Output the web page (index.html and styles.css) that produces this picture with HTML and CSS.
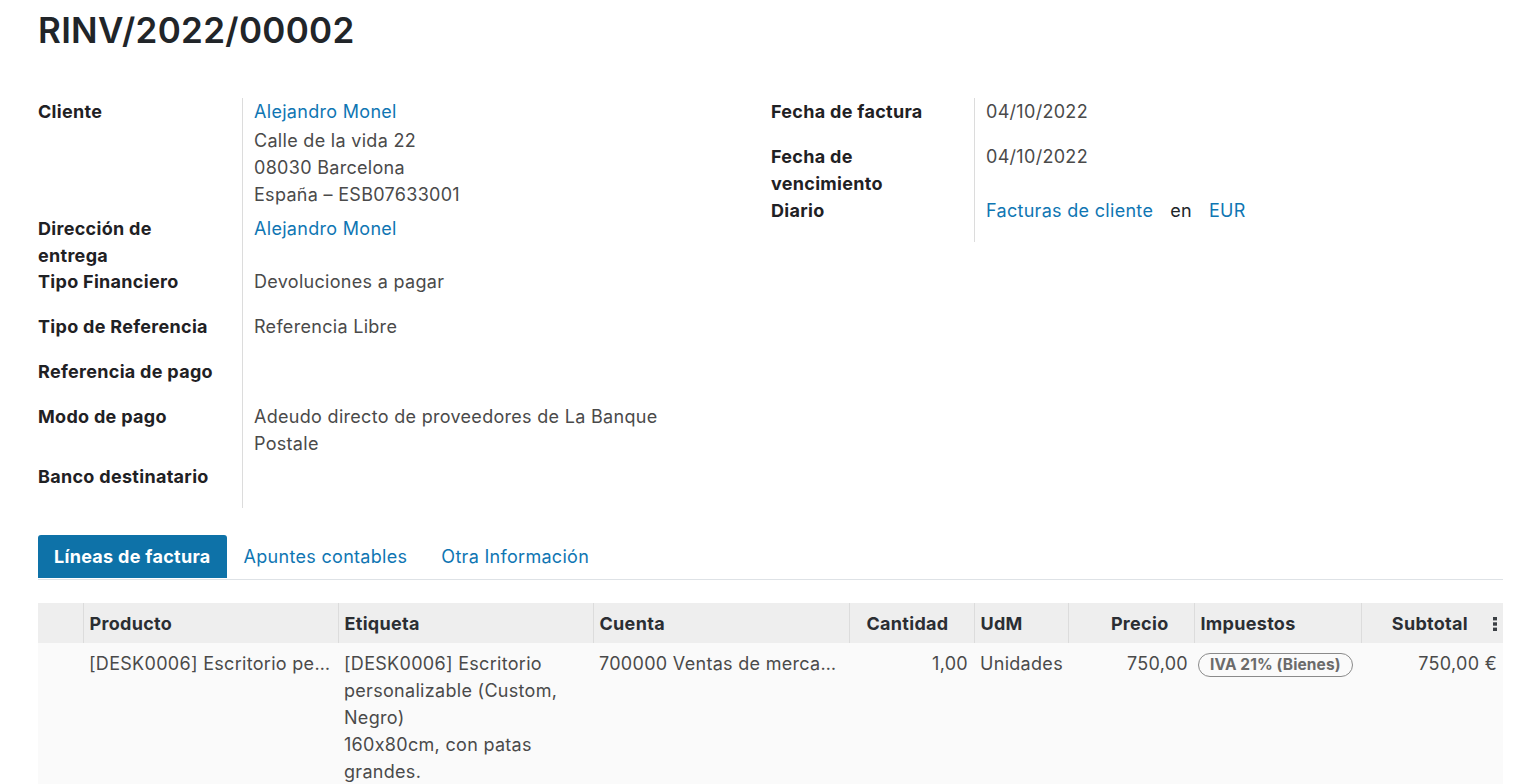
FILE: index.html
```html
<!DOCTYPE html>
<html lang="es">
<head>
<meta charset="utf-8">
<title>RINV/2022/00002</title>
<link rel="stylesheet" href="styles.css">
</head>
<body>
<div class="sheet">
  <h1 class="title">RINV/2022/00002</h1>

  <div class="groups">
    <div class="group group-left">
      <div class="row">
        <div class="label">Cliente</div>
        <div class="value multi">
          <a class="link first">Alejandro Monel</a>
          <div>Calle de la vida 22</div>
          <div>08030 Barcelona</div>
          <div>España – ESB07633001</div>
        </div>
      </div>
      <div class="row tight">
        <div class="label">Dirección de entrega</div>
        <div class="value"><a class="link">Alejandro Monel</a></div>
      </div>
      <div class="row">
        <div class="label">Tipo Financiero</div>
        <div class="value">Devoluciones a pagar</div>
      </div>
      <div class="row">
        <div class="label">Tipo de Referencia</div>
        <div class="value">Referencia Libre</div>
      </div>
      <div class="row">
        <div class="label">Referencia de pago</div>
        <div class="value"></div>
      </div>
      <div class="row">
        <div class="label">Modo de pago</div>
        <div class="value multi wrap">Adeudo directo de proveedores de La Banque Postale</div>
      </div>
      <div class="row">
        <div class="label">Banco destinatario</div>
        <div class="value"></div>
      </div>
    </div>

    <div class="group group-right">
      <div class="row">
        <div class="label">Fecha de factura</div>
        <div class="value">04/10/2022</div>
      </div>
      <div class="row">
        <div class="label">Fecha de vencimiento</div>
        <div class="value">04/10/2022</div>
      </div>
      <div class="row">
        <div class="label">Diario</div>
        <div class="value journal"><a class="link">Facturas de cliente</a><span class="en">en</span><a class="link">EUR</a></div>
      </div>
    </div>
  </div>

  <ul class="tabs">
    <li class="tab active">Líneas de factura</li>
    <li class="tab">Apuntes contables</li>
    <li class="tab">Otra Información</li>
  </ul>

  <table class="lines">
    <colgroup>
      <col class="c-handle">
      <col class="c-product">
      <col class="c-label">
      <col class="c-account">
      <col class="c-qty">
      <col class="c-uom">
      <col class="c-price">
      <col class="c-tax">
      <col class="c-subtotal">
    </colgroup>
    <thead>
      <tr>
        <th></th>
        <th>Producto</th>
        <th>Etiqueta</th>
        <th>Cuenta</th>
        <th class="num">Cantidad</th>
        <th>UdM</th>
        <th class="num">Precio</th>
        <th>Impuestos</th>
        <th class="num last">Subtotal<span class="opt"><svg width="4" height="14" viewBox="0 0 4 14"><rect x="0" y="0" width="4" height="3.4"/><rect x="0" y="5.3" width="4" height="3.4"/><rect x="0" y="10.6" width="4" height="3.4"/></svg></span></th>
      </tr>
    </thead>
    <tbody>
      <tr>
        <td></td>
        <td class="trunc">[DESK0006] Escritorio personalizable (Custom, Negro)</td>
        <td>[DESK0006] Escritorio personalizable (Custom, Negro)<br>160x80cm, con patas grandes.</td>
        <td class="trunc">700000 Ventas de mercaderías en España</td>
        <td class="num">1,00</td>
        <td>Unidades</td>
        <td class="num">750,00</td>
        <td><span class="badge">IVA 21% (Bienes)</span></td>
        <td class="num">750,00 €</td>
      </tr>
    </tbody>
  </table>
</div>
</body>
</html>
```

FILE: styles.css
```css
* { box-sizing: border-box; }

html, body {
  margin: 0;
  padding: 0;
  background: #ffffff;
}

body {
  font-family: "Inter", "Open Sans", "Liberation Sans", sans-serif;
  font-size: 18px;
  letter-spacing: 0.3px;
  font-feature-settings: "calt" 0;
  color: #4a4a4a;
}

.sheet {
  padding: 0 16px 0 38px;
}

.title {
  margin: 0;
  padding-top: 7px;
  font-size: 35px;
  line-height: 46px;
  font-weight: 600;
  color: #212529;
  letter-spacing: 0.3px;
}

.groups {
  display: grid;
  grid-template-columns: 733px 1fr;
  margin-top: 45px;
}

.row {
  display: flex;
  min-height: 45px;
}

.row.tight {
  margin-bottom: -1px;
}

.label {
  width: 204px;
  flex: none;
  font-weight: 700;
  color: #1f2124;
  line-height: 27px;
  padding-right: 24px;
}

.group-right .label {
  width: 203px;
}

.value {
  flex: 1;
  border-left: 1px solid #dcdcdc;
  padding-left: 11px;
  line-height: 27px;
}

.value.multi {
  padding-bottom: 7px;
}

.value.wrap {
  max-width: 440px;
  padding-bottom: 6px;
}

.group-right .value {
  max-width: 500px;
}

.link {
  color: #0f76b3;
  text-decoration: none;
  display: inline-block;
}

.link.first {
  display: block;
  margin-bottom: 2px;
}

.journal .en {
  color: #212529;
  margin: 0 17px;
}

.tabs {
  list-style: none;
  margin: 27px 0 0 0;
  padding: 0;
  display: flex;
  border-bottom: 1px solid #dee2e6;
  height: 45px;
}

.tab {
  padding: 0 17px;
  height: 43px;
  line-height: 43px;
  color: #0f76b3;
}

.tab.active {
  background: #0e72a8;
  color: #ffffff;
  font-weight: 700;
  border-radius: 3px 3px 0 0;
  padding: 0 16px;
}

.lines {
  margin-top: 23px;
  width: 100%;
  border-collapse: collapse;
  table-layout: fixed;
}

.c-handle { width: 45px; }
.c-product { width: 255px; }
.c-label { width: 255px; }
.c-account { width: 256px; }
.c-qty { width: 125px; }
.c-uom { width: 94px; }
.c-price { width: 126px; }
.c-tax { width: 167px; }
.c-subtotal { width: 142px; }

.lines thead tr {
  background: #eeeeee;
}

.lines th {
  height: 40px;
  padding: 0 6px;
  text-align: left;
  font-weight: 700;
  color: #2b2e33;
  border-left: 1px solid #dcdcdc;
  white-space: nowrap;
}

.lines th:first-child {
  border-left: none;
}

.lines th.num {
  text-align: right;
  padding-right: 25px;
}

.lines th.last {
  padding-right: 6px;
}

.opt {
  display: inline-block;
  margin-left: 25px;
  vertical-align: -1px;
}

.opt svg {
  fill: #3b3f44;
  display: block;
}

.lines tbody tr {
  background: #fafafa;
}

.lines td {
  padding: 7px 6px 0 6px;
  vertical-align: top;
  line-height: 27px;
  height: 141px;
}

.lines td.num {
  text-align: right;
}

.lines td.trunc {
  white-space: nowrap;
  overflow: hidden;
  text-overflow: ellipsis;
}

.badge {
  display: inline-block;
  border: 1px solid #8a8a8a;
  border-radius: 12px;
  padding: 0 11px;
  font-size: 15.5px;
  line-height: 22px;
  font-weight: 700;
  letter-spacing: 0.1px;
  color: #6b6b6b;
  margin-left: -2px;
}
```
